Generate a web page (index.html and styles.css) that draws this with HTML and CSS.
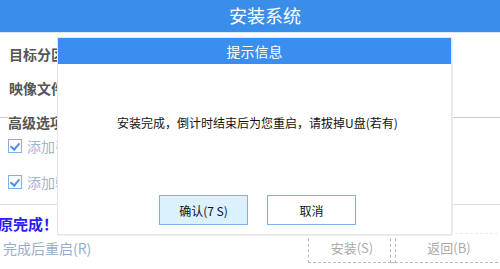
FILE: index.html
```html
<!DOCTYPE html>
<html lang="zh-CN">
<head>
    <meta charset="UTF-8">
    <title>安装系统</title>
    <link rel="stylesheet" href="styles.css">
</head>
<body>
    <div class="app">
        <div class="topbar">安装系统</div>

        <div class="panel">
            <div class="field">目标分区</div>
            <div class="field">映像文件</div>
            <div class="section"><span>高级选项</span></div>
            <label class="check"><span class="box"></span>添加引导</label>
            <label class="check"><span class="box"></span>添加驱动</label>
            <div class="status">原完成！</div>
            <div class="footer">
                <span class="reboot">完成后重启(R)</span>
                <div class="actions">
                    <span class="ghost">安装(S)</span>
                    <span class="ghost">返回(B)</span>
                </div>
            </div>
        </div>

        <div class="dialog">
            <div class="dialog-title">提示信息</div>
            <div class="dialog-body">
                <p class="msg">安装完成，倒计时结束后为您重启，请拔掉U盘(若有)</p>
                <div class="dialog-buttons">
                    <button class="btn btn-ok">确认(7 S)</button>
                    <button class="btn">取消</button>
                </div>
            </div>
        </div>
    </div>
</body>
</html>
```

FILE: styles.css
```css
body {
    margin: 0;
    font-family: "Noto Sans CJK SC", "Noto Sans", sans-serif;
    background: #fff;
}
.app {
    width: 500px;
    height: 269px;
    position: relative;
    overflow: hidden;
}
.topbar {
    height: 32px;
    background-color: #3a8ee9;
    color: #fff;
    font-size: 18px;
    line-height: 31px;
    text-align: center;
    padding-left: 30px;
    border-bottom: 1px solid #dde8f5;
}
.panel {
    padding-top: 4px;
}
.field {
    height: 34px;
    line-height: 34px;
    padding-left: 9px;
    font-size: 14px;
    font-weight: bold;
    color: #555;
}
.section {
    height: 23px;
    position: relative;
    display: flow-root;
}
.section::before {
    content: "";
    display: block;
    border-top: 1px solid #ccc;
    margin-top: 12px;
}
.section span {
    position: absolute;
    left: 8px;
    top: 0;
    line-height: 34px;
    padding-right: 4px;
    background: #fff;
    font-size: 14px;
    font-weight: bold;
    color: #555;
}
.check {
    height: 36px;
    display: flex;
    align-items: center;
    padding-left: 8px;
    font-size: 14px;
    color: #a2b4cf;
}
.box {
    width: 12px;
    height: 12px;
    border: 1px solid #7fb0ea;
    margin-right: 5px;
    position: relative;
}
.box::after {
    content: "";
    position: absolute;
    left: 3px;
    top: 1px;
    width: 4px;
    height: 7px;
    border-right: 2px solid #4f92e0;
    border-bottom: 2px solid #4f92e0;
    transform: rotate(40deg);
}
.status {
    margin-top: 4px;
    border-top: 1px solid #ddd;
    height: 28px;
    line-height: 38px;
    font-size: 15px;
    font-weight: bold;
    color: #2a1cff;
    margin-left: -2px;
}
.footer {
    display: flex;
    justify-content: space-between;
    align-items: flex-start;
}
.reboot {
    padding-left: 3px;
    font-size: 14px;
    line-height: 20px;
    color: #9aadc8;
    margin-top: 5px;
}
.actions {
    display: flex;
}
.ghost {
    width: 86px;
    height: 28px;
    line-height: 28px;
    text-align: center;
    font-size: 13px;
    color: #aaa;
    border: 1px dashed #bbb;
    border-top-color: #eee;
}
.ghost + .ghost {
    width: 116px;
    margin-left: -6px;
    margin-right: -8px;
}

.dialog {
    position: absolute;
    left: 57px;
    top: 37px;
    width: 393px;
    height: 196px;
    background: #fff;
    border: 1px solid #e6e6e6;
    box-shadow: 1px 1px 0 #eee;
    display: flex;
    flex-direction: column;
}
.dialog-title {
    height: 26px;
    line-height: 26px;
    background-color: #3a8ef0;
    color: #fff;
    font-size: 14px;
    text-align: center;
}
.dialog-body {
    flex: 1;
}
.msg {
    margin: 49px 0 0;
    font-size: 12px;
    line-height: 20px;
    color: #111;
    text-align: center;
    padding-left: 6px;
}
.dialog-buttons {
    display: flex;
    justify-content: center;
    gap: 19px;
    margin-top: 62px;
    padding-left: 6px;
}
.btn {
    width: 89px;
    height: 30px;
    font-family: "Noto Sans CJK SC", sans-serif;
    font-size: 12px;
    color: #111;
    background: #fff;
    border: 1px solid #7fb1e6;
    padding: 0;
}
.btn-ok {
    background: #dbf1fe;
}
```
